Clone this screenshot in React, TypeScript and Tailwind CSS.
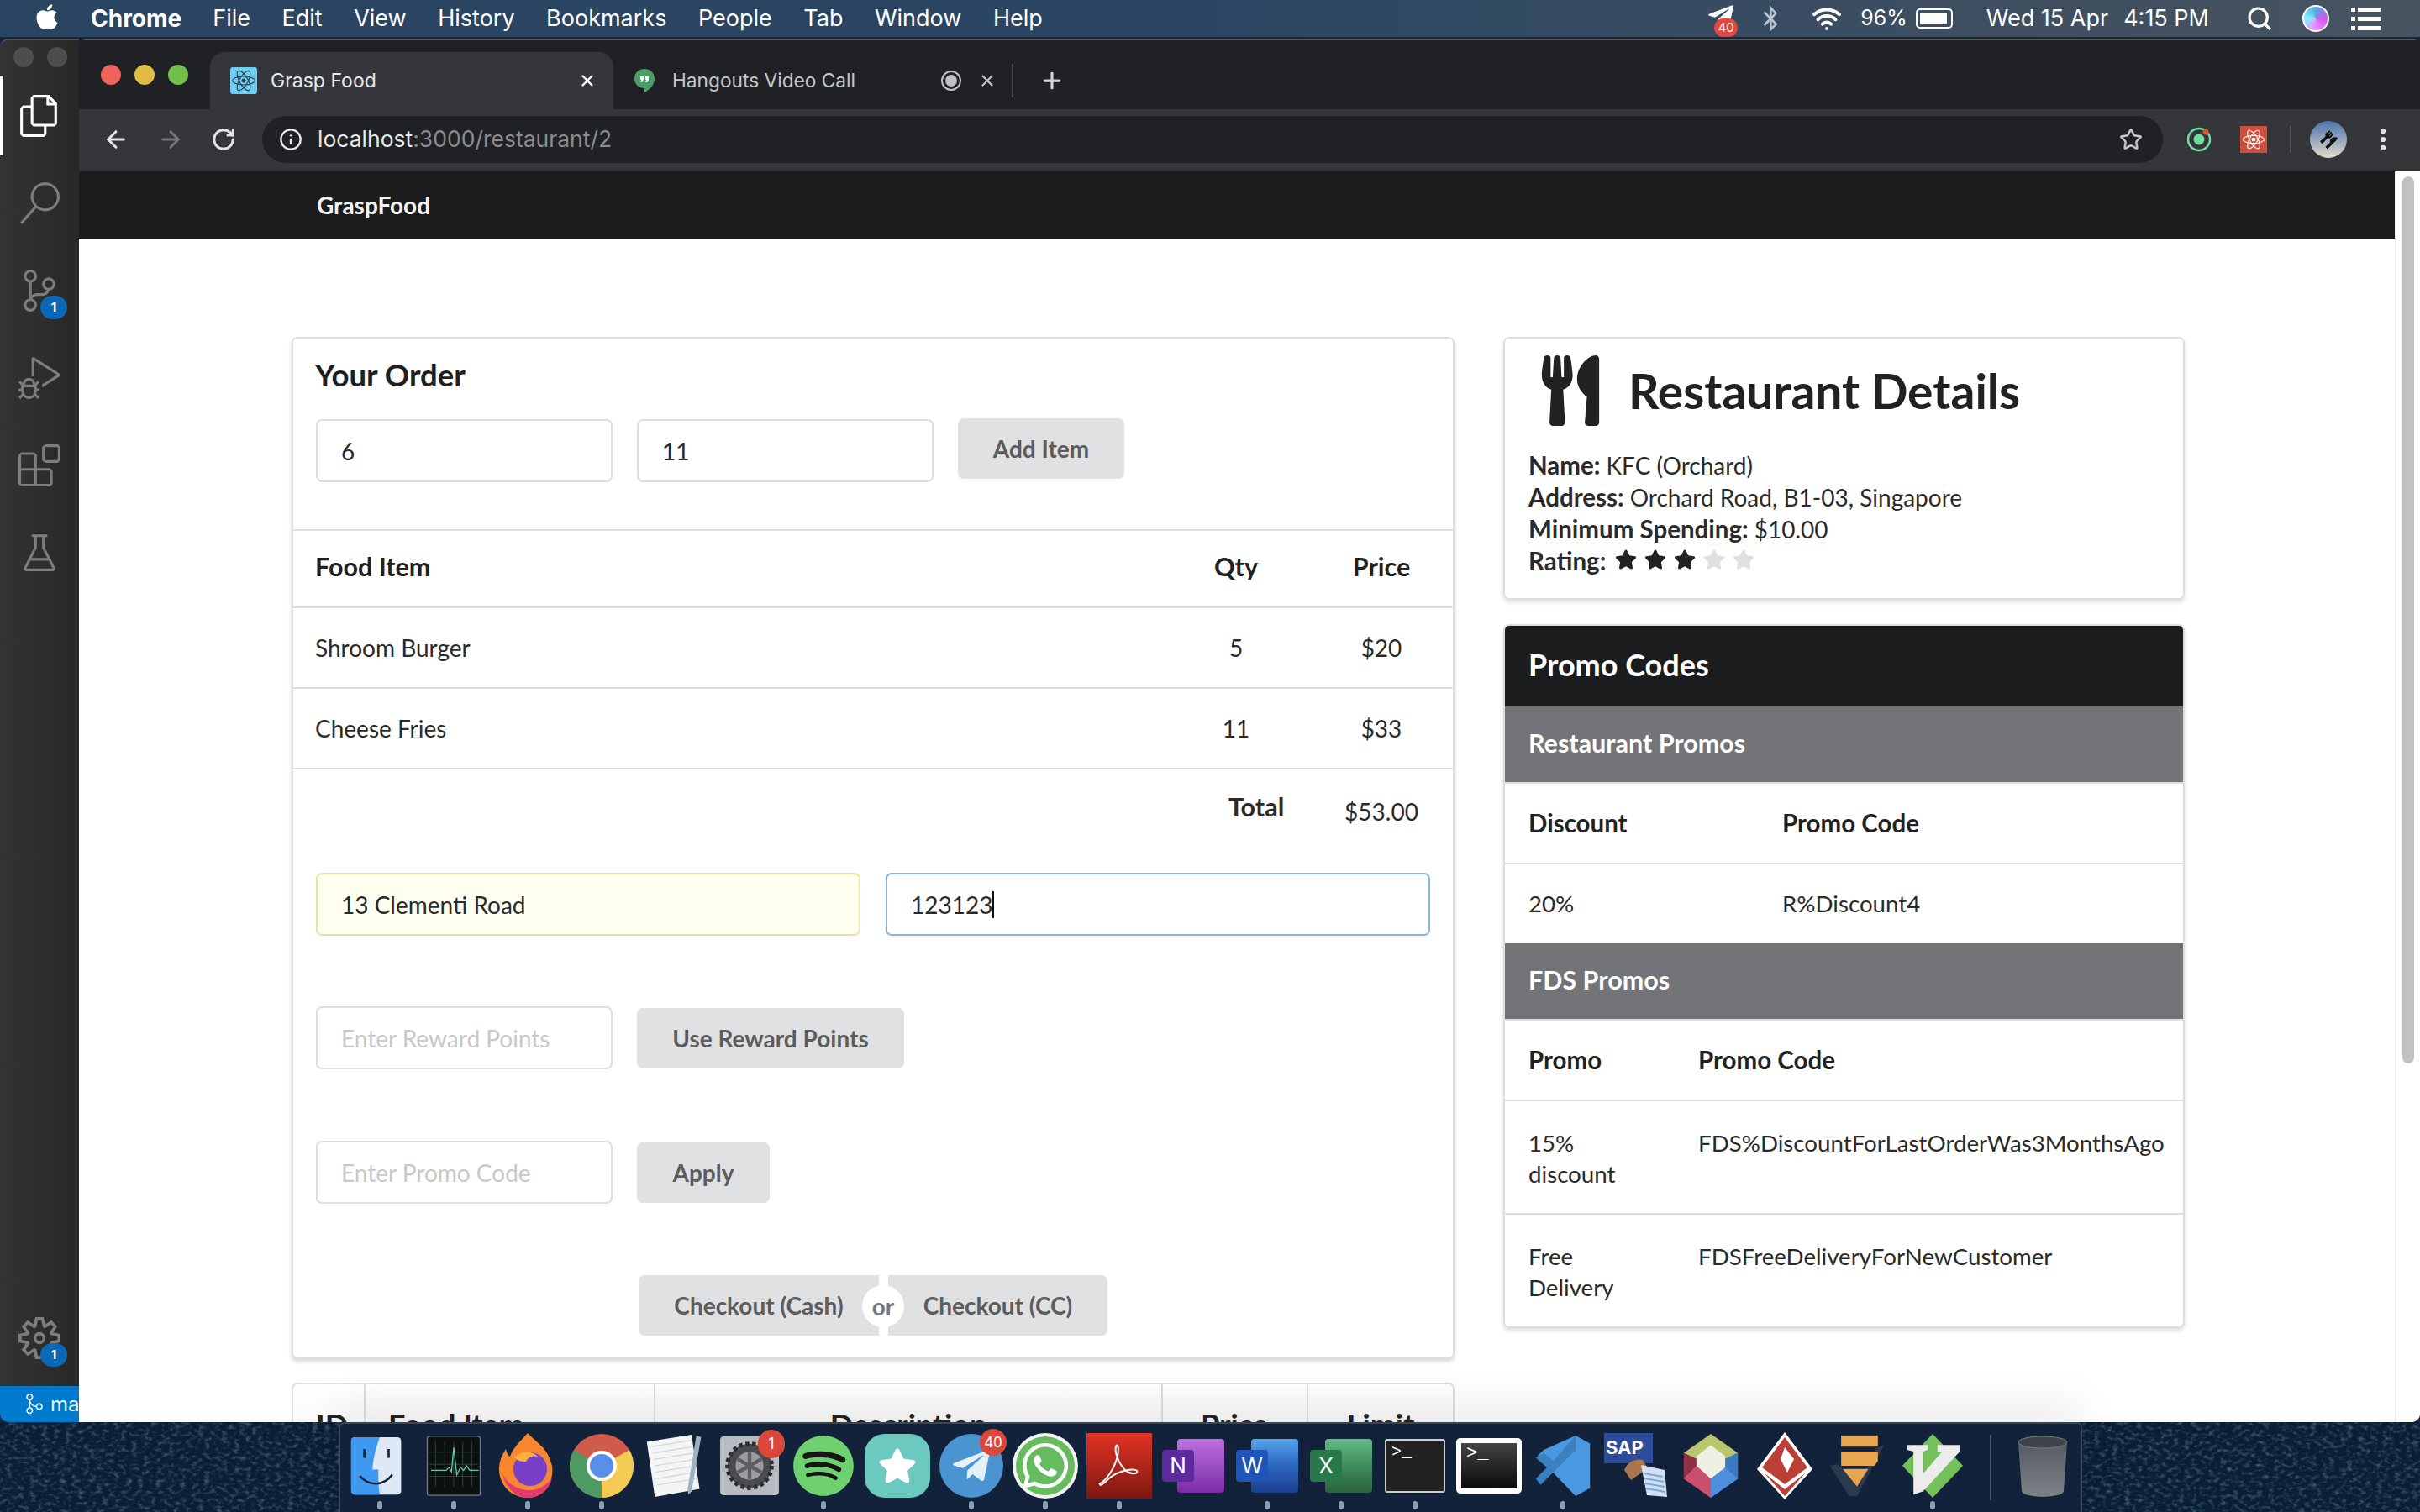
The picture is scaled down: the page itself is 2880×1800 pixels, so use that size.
import React from 'react';
import { FaApple, FaReact, FaStar, FaUtensils, FaSpotify, FaTelegramPlane, FaWhatsapp, FaBluetoothB } from 'react-icons/fa';
import { VscFiles, VscSearch, VscSourceControl, VscDebugAlt, VscExtensions, VscBeaker, VscSettingsGear, VscGitMerge } from 'react-icons/vsc';
import { ArrowLeft, ArrowRight, RotateCw, Info, Star, X, Plus, Search, EllipsisVertical, Wifi } from 'lucide-react';

const MENUS = ['File', 'Edit', 'View', 'History', 'Bookmarks', 'People', 'Tab', 'Window', 'Help'];

const MenuBar = () => (
  <div className="h-[44px] shrink-0 flex items-center bg-gradient-to-r from-[#294562] via-[#2b4663] to-[#48535f] text-white font-['Inter',sans-serif] text-[27px]">
    <FaApple className="ml-[41px] w-[30px] h-[34px] -mt-1" />
    <span className="ml-[37px] font-bold text-[28px]">Chrome</span>
    <div className="ml-[37px] flex gap-[37.500px]">
      {MENUS.map(m => <span key={m}>{m}</span>)}
    </div>
    <div className="ml-auto flex items-center">
      <div className="relative w-[34px] h-[40px] mr-[29px]">
        <FaTelegramPlane className="w-[34px] h-[34px]" />
        <span className="absolute left-[9px] top-[20px] w-[28px] h-[22px] rounded-full bg-[#e2483d] text-[15px] leading-[22px] text-center">40</span>
      </div>
      <FaBluetoothB className="w-[26px] h-[32px] text-[#b8c4d0] mr-[34px]" />
      <Wifi className="w-[40px] h-[36px] mr-[20px]" strokeWidth={2.6} />
      <span className="text-[25px]">96%</span>
      <div className="ml-[10px] w-[44px] h-[24px] border-2 border-white rounded-[5px] p-[3px] pr-[5px]">
        <div className="h-full bg-white rounded-[2px]" />
      </div>
      <span className="ml-[40px]">Wed 15 Apr</span>
      <span className="ml-[18px]">4:15 PM</span>
      <Search className="ml-[44px] w-[32px] h-[32px]" strokeWidth={2.4} />
      <div className="ml-[35px] w-[32px] h-[32px] rounded-full bg-[conic-gradient(#5ad,#c5e,#e8f,#8ef,#5ad)] border-2 border-white" />
      <div className="ml-[26px] mr-[46px] w-[36px] flex flex-col gap-[6px]">
        {[0, 1, 2].map(i => (
          <div key={i} className="flex gap-[3px]">
            <div className="w-[5px] h-[5px] bg-white" />
            <div className="flex-1 h-[5px] bg-white" />
          </div>
        ))}
      </div>
    </div>
  </div>
);

const ActivityIcon: React.FC<{ children: React.ReactNode; active?: boolean; badge?: boolean }> = ({ children, active, badge }) => (
  <div className={`relative h-[104px] flex items-center justify-center ${active ? 'text-white' : 'text-[#7d7d7d]'}`}>
    {active && <div className="absolute left-0 top-[4px] w-[4px] h-[95px] bg-white" />}
    {children}
    {badge && (
      <span className="absolute left-[48px] top-[58px] w-[32px] h-[28px] rounded-full bg-[#0a68b4] text-white text-[15px] font-bold leading-[28px] text-center font-['Inter',sans-serif]">1</span>
    )}
  </div>
);

const VsCodeRail = () => (
  <div className="w-[94px] shrink-0 flex flex-col bg-gradient-to-r from-[#333333] to-[#282828] rounded-tl-[10px] rounded-bl-[10px] overflow-hidden border-t-2 border-[#555]">
    <div className="h-[38px] flex items-start gap-[16px] pl-[16px] pt-[8px]">
      <div className="w-[24px] h-[24px] rounded-full bg-[#4d4d4d]" />
      <div className="w-[24px] h-[24px] rounded-full bg-[#4d4d4d]" />
    </div>
    <ActivityIcon active><VscFiles className="w-[50px] h-[50px]" /></ActivityIcon>
    <ActivityIcon><VscSearch className="w-[50px] h-[50px]" /></ActivityIcon>
    <ActivityIcon badge><VscSourceControl className="w-[50px] h-[50px]" /></ActivityIcon>
    <ActivityIcon><VscDebugAlt className="w-[50px] h-[50px]" /></ActivityIcon>
    <ActivityIcon><VscExtensions className="w-[50px] h-[50px]" /></ActivityIcon>
    <ActivityIcon><VscBeaker className="w-[50px] h-[50px]" /></ActivityIcon>
    <div className="mt-auto">
      <ActivityIcon badge><VscSettingsGear className="w-[50px] h-[50px]" /></ActivityIcon>
    </div>
    <div className="h-[43px] mt-[5px] bg-[#007acc] flex items-center text-[#e6f2fa] text-[24px] font-['Inter',sans-serif] pl-[28px] gap-[6px] overflow-hidden">
      <VscGitMerge className="w-[26px] h-[26px] shrink-0" />
      <span>ma</span>
    </div>
  </div>
);

const ChromeChrome = () => (
  <>
    <div className="h-[84px] shrink-0 flex items-end bg-[#202124] border-t-2 border-[#5c5c5c] font-['Inter',sans-serif] text-[23px]">
      <div className="flex gap-[16px] w-[156px] pl-[26px] self-start pt-[29px]">
        <div className="w-[24px] h-[24px] rounded-full bg-[#f1625a]" />
        <div className="w-[24px] h-[24px] rounded-full bg-[#e2bd45]" />
        <div className="w-[24px] h-[24px] rounded-full bg-[#72c04a]" />
      </div>
      <div className="w-[480px] h-[68px] bg-[#35363a] rounded-t-[18px] flex items-center pl-[24px] text-[#e8eaed]">
        <div className="w-[32px] h-[32px] rounded-[3px] bg-[#6fd0f5] flex items-center justify-center text-[#28404e]">
          <FaReact className="w-[28px] h-[28px]" />
        </div>
        <span className="ml-[16px]">Grasp Food</span>
        <X className="ml-auto mr-[20px] w-[22px] h-[22px] text-white" strokeWidth={2.6} />
      </div>
      <div className="h-[68px] flex items-center pl-[24px] text-[#c4c6c9]">
        <svg viewBox="0 0 26 30" className="w-[26px] h-[30px]">
          <path d="M13 1C6 1 1 6 1 12.5S6 24 13 24v5c6-3 12-9 12-16.5C25 6 20 1 13 1Z" fill="#4a9d67" />
          <path d="M8 10h4v4l-2 3H8l1.500-3H8Zm6 0h4v4l-2 3h-2l1.500-3H14Z" fill="#fff" />
        </svg>
        <span className="ml-[20px] w-[320px] text-[22.700px]">Hangouts Video Call</span>
        <div className="w-[24px] h-[24px] rounded-full border-2 border-[#bdc1c6] p-[3px]">
          <div className="w-full h-full rounded-full bg-[#bdc1c6]" />
        </div>
        <X className="ml-[20px] w-[22px] h-[22px] text-[#c4c6c9]" strokeWidth={2.4} />
        <div className="ml-[18px] w-[2px] h-[40px] bg-[#4b4c50]" />
        <Plus className="ml-[31px] w-[30px] h-[30px] text-[#d0d2d5]" strokeWidth={2.6} />
      </div>
    </div>
    <div className="h-[72px] shrink-0 flex items-center bg-[#35363a] border-b-2 border-[#2c2d30] box-content font-['Inter',sans-serif]">
      <ArrowLeft className="ml-[28px] w-[32px] h-[32px] text-[#e3e4e6]" strokeWidth={2.2} />
      <ArrowRight className="ml-[33px] w-[32px] h-[32px] text-[#77787b]" strokeWidth={2.2} />
      <RotateCw className="ml-[32px] w-[30px] h-[30px] text-[#e3e4e6]" strokeWidth={2.4} />
      <div className="ml-[31px] w-[2262px] h-[56px] rounded-full bg-[#202124] flex items-center pl-[20px] pr-[24px] text-[26.5px] text-[#e8eaed]">
        <Info className="w-[28px] h-[28px]" strokeWidth={2} />
        <span className="ml-[18px]">localhost<span className="text-[#8a8c90]">:3000/restaurant/2</span></span>
        <Star className="ml-auto w-[28px] h-[28px] text-[#c4c6c9]" strokeWidth={2.2} />
      </div>
      <svg viewBox="0 0 32 32" className="ml-[27px] w-[32px] h-[32px]">
        <circle cx="16" cy="16" r="13" fill="none" stroke="#6fdca0" strokeWidth="2.500" />
        <circle cx="16" cy="16" r="6.500" fill="#6fdca0" />
        <circle cx="24" cy="7" r="3.500" fill="#d8553d" />
      </svg>
      <div className="ml-[33px] w-[32px] h-[32px] bg-[#cf4f3f] flex items-center justify-center text-white">
        <FaReact className="w-[26px] h-[26px]" />
      </div>
      <div className="ml-[27px] w-[2px] h-[32px] bg-[#55565a]" />
      <div className="ml-[22px] w-[44px] h-[44px] rounded-full bg-gradient-to-b from-[#4c76ad] via-[#95a5bb] to-[#e2dccb] flex items-center justify-center text-[#111]">
        <FaUtensils className="w-[18px] h-[18px] rotate-45" />
      </div>
      <EllipsisVertical className="ml-[26px] w-[34px] h-[34px] text-[#e3e4e6]" strokeWidth={2.4} />
    </div>
  </>
);

const Input: React.FC<{ value?: string; placeholder?: string; w?: string }> = ({ value, placeholder, w = 'w-[353px]' }) => (
  <input
    readOnly
    value={value}
    placeholder={placeholder}
    className={`${w} h-[75px] px-[28px] border-2 border-[#dededf] rounded-[7px] bg-white text-[28px] text-[#2a2a2a] placeholder:text-[#c8c8c8] outline-none`}
  />
);

const Button: React.FC<{ children: React.ReactNode; className?: string }> = ({ children, className }) => (
  <button className={`h-[72px] px-[40px] bg-[#e0e1e2] text-[#5c5c5c] rounded-[7px] text-[28px] font-bold ${className || ''}`}>{children}</button>
);

const ITEMS = [
  { name: 'Shroom Burger', qty: '5', price: '$20' },
  { name: 'Cheese Fries', qty: '11', price: '$33' },
];

const OrderCard = () => (
  <div className="h-[1217px] border-2 border-[#dededf] rounded-[7px] shadow-[0_3px_5px_rgba(34,36,38,0.18)] flex flex-col bg-white">
    <h3 className="pl-[26px] pt-[20px] text-[36.5px] leading-[46px] font-bold text-[#1f1f1f]">Your Order</h3>
    <div className="pl-[27px] mt-[30px] flex gap-[29px] h-[131px] items-start">
      <Input value="6" />
      <Input value="11" />
      <Button className="w-[198px] !px-0 -mt-[1px]">Add Item</Button>
    </div>
    <div className="border-t-2 border-[#dededf] h-[92px] flex items-center text-[30.5px] font-bold text-[#222] pb-[4px]">
      <span className="pl-[26px] flex-1">Food Item</span>
      <span className="w-[176px] text-center">Qty</span>
      <span className="w-[170px] text-center">Price</span>
    </div>
    {ITEMS.map(i => (
      <div key={i.name} className="border-t-2 border-[#dededf] h-[96px] flex items-center text-[#2a2a2a]">
        <span className="pl-[26px] flex-1">{i.name}</span>
        <span className="w-[176px] text-center">{i.qty}</span>
        <span className="w-[170px] text-center">{i.price}</span>
      </div>
    ))}
    <div className="border-t-2 border-[#dededf] h-[125px] flex items-center text-[#2a2a2a] pb-[24px]">
      <span className="flex-1" />
      <span className="w-[176px] pl-[79px] text-[30.5px] font-bold -mt-[10px]">Total</span>
      <span className="w-[170px] text-center">$53.00</span>
    </div>
    <div className="pl-[27px] flex gap-[30px]">
      <input readOnly value="13 Clementi Road" className="w-[648px] h-[75px] px-[28px] border-2 border-[#e6e2a6] rounded-[7px] bg-[#fffff0] text-[28px] text-[#2a2a2a] outline-none" />
      <div className="w-[648px] h-[75px] px-[28px] border-2 border-[#85b7d9] rounded-[7px] flex items-center text-[28px] text-[#2a2a2a]">
        123123<span className="w-[2px] h-[32px] bg-[#111]" />
      </div>
    </div>
    <div className="pl-[27px] mt-[84px] flex gap-[29px] items-center">
      <Input placeholder="Enter Reward Points" />
      <Button className="w-[318px] !px-0">Use Reward Points</Button>
    </div>
    <div className="pl-[27px] mt-[85px] flex gap-[29px] items-center">
      <Input placeholder="Enter Promo Code" />
      <Button className="w-[158px] !px-0">Apply</Button>
    </div>
    <div className="mt-[85px] ml-[411px] flex w-[558px] h-[72px] relative">
      <Button className="w-[286px] !px-0 rounded-r-none">Checkout (Cash)</Button>
      <div className="w-[11px]" />
      <Button className="w-[261px] !px-0 rounded-l-none">Checkout (CC)</Button>
      <span className="absolute left-[266px] top-[12px] w-[50px] h-[50px] rounded-full bg-white text-[#777] font-bold text-[28px] leading-[50px] text-center">or</span>
    </div>
  </div>
);

const MenuTableHead = () => (
  <div className="mt-[28px] h-[200px] border-2 border-[#dededf] rounded-t-[7px] flex items-start bg-gradient-to-b from-[#ffffff] to-[#ebebeb] text-[36px] font-bold text-[#222] overflow-hidden">
    {[
      { label: 'ID', cls: 'w-[84px] pl-[27px]' },
      { label: 'Food Item', cls: 'w-[346px] pl-[27px] border-l-2 border-[#dededf]' },
      { label: 'Description', cls: 'w-[604px] text-center border-l-2 border-[#dededf]' },
      { label: 'Price', cls: 'w-[174px] text-center border-l-2 border-[#dededf]' },
      { label: 'Limit', cls: 'w-[174px] text-center border-l-2 border-[#dededf]' },
    ].map(h => (
      <div key={h.label} className={`h-full pt-[21px] ${h.cls}`}>{h.label}</div>
    ))}
  </div>
);

const RestaurantCard = () => (
  <div className="h-[313px] border-2 border-[#dededf] rounded-[7px] shadow-[0_3px_5px_rgba(34,36,38,0.15)] px-[28px] text-[#2a2a2a] text-[28px] leading-[38px]">
    <div className="flex items-center pt-[20px] pl-[12px]">
      <FaUtensils className="w-[76px] h-[84px] text-[#222]" />
      <h2 className="ml-[31px] text-[57px] leading-[84px] font-bold text-[#222]">Restaurant Details</h2>
    </div>
    <div className="mt-[28px]">
      <div><b className="text-[29.5px]">Name:</b> KFC (Orchard)</div>
      <div><b className="text-[29.5px]">Address:</b> Orchard Road, B1-03, Singapore</div>
      <div><b className="text-[29.5px]">Minimum Spending:</b> $10.00</div>
      <div className="flex items-center">
        <b className="text-[29.5px]">Rating:</b>
        <div className="ml-[11px] flex gap-[9px] -mt-[4px]">
          {[0, 1, 2, 3, 4].map(i => (
            <FaStar key={i} className={`w-[26px] h-[26px] ${i < 3 ? 'text-[#222]' : 'text-[#e0e0e0]'}`} />
          ))}
        </div>
      </div>
    </div>
  </div>
);

const PromoHead: React.FC<{ children: string }> = ({ children }) => (
  <div className="h-[90px] bg-[#737477] flex items-center pl-[28px] text-white text-[30.5px] font-bold pb-[2px]">{children}</div>
);

const PromoRow: React.FC<{ a: React.ReactNode; b: string; w: string; head?: boolean; tall?: boolean }> = ({ a, b, w, head, tall }) => (
  <div className={`flex border-t-2 border-[#dededf] pl-[28px] ${head ? 'h-[96px] items-center font-bold text-[29.5px] text-[#222]' : tall ? 'h-[135px] pt-[31px] leading-[37px]' : 'h-[96px] items-center'}`}>
    <div className={w}>{a}</div>
    <div>{b}</div>
  </div>
);

const PromoCard = () => (
  <div className="mt-[29px] border-2 border-[#dededf] rounded-[7px] shadow-[0_3px_5px_rgba(34,36,38,0.15)] text-[#2a2a2a] text-[27.7px] overflow-hidden">
    <div className="h-[96px] bg-[#1b1c1d] flex items-center pl-[28px] text-white text-[36px] font-bold pb-[4px]">Promo Codes</div>
    <PromoHead>Restaurant Promos</PromoHead>
    <PromoRow head a="Discount" b="Promo Code" w="w-[302px]" />
    <PromoRow a="20%" b="R%Discount4" w="w-[302px]" />
    <PromoHead>FDS Promos</PromoHead>
    <PromoRow head a="Promo" b="Promo Code" w="w-[202px]" />
    <PromoRow tall a={<>15%<br />discount</>} b="FDS%DiscountForLastOrderWas3MonthsAgo" w="w-[202px]" />
    <PromoRow tall a={<>Free<br />Delivery</>} b="FDSFreeDeliveryForNewCustomer" w="w-[202px]" />
  </div>
);

const Page = () => (
  <div className="flex-1 flex min-h-0 bg-white font-['Lato',sans-serif] text-[28px]">
    <div className="flex-1 min-w-0 flex flex-col overflow-hidden">
      <div className="h-[80px] shrink-0 bg-[#1b1c1d] flex items-center pl-[283px] text-[#f2f2f2] text-[28px] font-bold">GraspFood</div>
      <div className="flex pl-[253px] pt-[117px] gap-[58px]">
        <div className="w-[1384px] shrink-0">
          <OrderCard />
          <MenuTableHead />
        </div>
        <div className="w-[811px] shrink-0">
          <RestaurantCard />
          <PromoCard />
        </div>
      </div>
    </div>
    <div className="w-[30px] shrink-0 bg-white border-l-2 border-[#ececec] pt-[6px] pl-[7px]">
      <div className="w-[14px] h-[1056px] rounded-full bg-[#c2c2c2]" />
    </div>
  </div>
);

const Dot = () => <div className="w-[6px] h-[10px] rounded-full bg-[#8aa0b4]" />;

const Tile: React.FC<{ cls: string; label?: string; labelCls?: string }> = ({ cls, label, labelCls }) => (
  <div className={`relative w-[56px] ml-[18px] h-[64px] ${cls}`}>
    {label && <span className={`absolute -left-[18px] top-[13px] w-[38px] h-[38px] rounded-[4px] text-white text-[26px] leading-[38px] text-center font-['Inter',sans-serif] ${labelCls || ''}`}>{label}</span>}
  </div>
);

const DOCK: { key: string; run?: boolean; node: React.ReactNode }[] = [
  { key: 'finder', run: true, node: (
    <svg viewBox="0 0 80 80" className="w-[70px] h-[70px]">
      <rect x="1" y="1" width="68" height="78" rx="5" fill="#dfe9f5" />
      <path d="M6 1h34c-5 14-9 28-10 44h8c0 12 0 22 2 34H6a5 5 0 0 1-5-5V6a5 5 0 0 1 5-5Z" fill="#3d9af0" />
      <path d="M19 17v12M52 17v12" stroke="#123" strokeWidth="3" />
      <path d="M13 54c12 14 32 14 44-2" fill="none" stroke="#123" strokeWidth="3" />
    </svg>
  ) },
  { key: 'activity', run: true, node: (
    <svg viewBox="0 0 72 80" className="w-[72px] h-[72px]">
      <rect x="1" y="1" width="70" height="78" rx="3" fill="#0c1110" stroke="#6d7b84" strokeWidth="1.500" />
      <path d="M12 8v60M24 8v60M36 8v60M48 8v60M60 8v60M4 22h64M4 38h64M4 54h64" stroke="#2d4a44" strokeWidth="1" />
      <path d="M6 46h20l4-4 3 6 3-32 4 36 5-10 4 4 4-6 4 6h12" fill="none" stroke="#63c6a7" strokeWidth="1.500" />
    </svg>
  ) },
  { key: 'firefox', run: true, node: (
    <svg viewBox="0 0 80 80" className="w-[80px] h-[80px]">
      <path d="M40 1c8 10 24 16 29 39 3 22-12 38-29 38C20 78 5 62 6 42c1-12 6-18 8-22 1 5 3 8 5 9 3-10 12-18 21-28Z" fill="#f7862e" />
      <path d="M10 50c4 16 16 28 30 28 16 0 26-10 29-24-8 12-22 18-36 14C22 65 14 58 10 50Z" fill="#e03a6f" />
      <circle cx="43" cy="44" r="20" fill="#7a3fc7" />
      <path d="M24 30c8-8 22-8 28-1-8-2-12 2-14 6-6 0-11-1-14-5Z" fill="#f9b13c" />
    </svg>
  ) },
  { key: 'chrome', run: true, node: (
    <svg viewBox="0 0 80 80" className="w-[80px] h-[80px]">
      <circle cx="40" cy="40" r="38" fill="#d05a4b" />
      <path d="M40 40 73 21a38 38 0 0 1-33 57Z" fill="#f3ca52" />
      <path d="M40 40 40 78A38 38 0 0 1 7 21Z" fill="#4f9a62" />
      <circle cx="40" cy="40" r="18" fill="#fff" />
      <circle cx="40" cy="40" r="14" fill="#5a8fe8" />
    </svg>
  ) },
  { key: 'textedit', node: (
    <svg viewBox="0 0 80 80" className="w-[76px] h-[76px]">
      <path d="M4 10 60 1l10 68-56 10Z" fill="#f4f5f6" />
      <path d="M10 16l50-8M12 24l50-8M13 32l50-8M14 40l50-8M15 48l50-8M16 56l50-8M17 64l50-8" stroke="#c9cdd2" strokeWidth="1" />
      <path d="M66 2l6 2-12 68-4 4-1-6Z" fill="#9fb2c2" />
    </svg>
  ) },
  { key: 'prefs', node: (
    <div className="relative">
      <svg viewBox="0 0 80 80" className="w-[72px] h-[70px]">
        <rect width="80" height="80" rx="5" fill="#b7bcc2" />
        <circle cx="40" cy="40" r="30" fill="#4a4c4f" stroke="#2b2c2e" strokeWidth="6" strokeDasharray="5 4" />
        <circle cx="40" cy="40" r="19" fill="#9a9c9f" />
        <path d="M40 22v36M24 49l32-18M24 31l32 18" stroke="#5d5f62" strokeWidth="5" />
      </svg>
      <span className="absolute -right-[6px] -top-[8px] w-[32px] h-[34px] rounded-full bg-[#d9483b] text-white text-[18px] leading-[34px] text-center font-['Inter',sans-serif]">1</span>
    </div>
  ) },
  { key: 'spotify', run: true, node: <div className="w-[70px] h-[70px] rounded-full bg-[#161616] flex items-center justify-center"><FaSpotify className="w-[74px] h-[74px] text-[#6ed06e] shrink-0" /></div> },
  { key: 'star', node: (
    <div className="w-[78px] h-[76px] rounded-[24px] bg-[#6cc9bf] flex items-center justify-center text-white"><FaStar className="w-[46px] h-[50px]" /></div>
  ) },
  { key: 'telegram', run: true, node: (
    <div className="relative w-[76px] h-[76px] rounded-full bg-[#4a94d2] flex items-center justify-center text-[#e4f1fa]">
      <FaTelegramPlane className="w-[50px] h-[50px]" />
      <span className="absolute -right-[4px] -top-[6px] w-[32px] h-[32px] rounded-full bg-[#d9483b] text-white text-[17px] leading-[32px] text-center font-['Inter',sans-serif]">40</span>
    </div>
  ) },
  { key: 'whatsapp', run: true, node: (
    <div className="w-[70px] h-[70px] rounded-full bg-[#66bb5f] ring-[4px] ring-[#f2f2f2] flex items-center justify-center text-white"><FaWhatsapp className="w-[62px] h-[62px]" /></div>
  ) },
  { key: 'acrobat', run: true, node: (
    <svg viewBox="0 0 80 80" className="w-[80px] h-[78px]">
      <defs><linearGradient id="acro" x1="0" y1="0" x2="0" y2="1"><stop offset="0" stopColor="#e23325" /><stop offset="1" stopColor="#7d1710" /></linearGradient></defs>
      <rect width="80" height="80" fill="url(#acro)" />
      <path d="M16 62c8-4 18-18 22-34 2-10 0-16-2-12-2 6 2 20 12 30 6 5 14 4 14 1-1-5-22-2-34 8-6 6-12 11-12 7Z" fill="none" stroke="#fff" strokeWidth="2" />
    </svg>
  ) },
  { key: 'onenote', node: <Tile cls="bg-gradient-to-b from-[#bb6fe0] to-[#7b2ca8] rounded-[4px]" label="N" labelCls="bg-[#5d2a9c]" /> },
  { key: 'word', run: true, node: <Tile cls="bg-gradient-to-b from-[#56a2ea] via-[#2d66bf] to-[#1d3f90] rounded-[4px]" label="W" labelCls="bg-[#1f55b8]" /> },
  { key: 'excel', run: true, node: <Tile cls="bg-gradient-to-b from-[#63bb85] via-[#3f8c5a] to-[#2b6240] rounded-[4px]" label="X" labelCls="bg-[#28794a]" /> },
  { key: 'iterm', run: true, node: (
    <div className="w-[72px] h-[64px] bg-[#222] border-2 border-[#c9cdd2] rounded-[3px] pl-[6px] text-white text-[20px] font-['Liberation_Mono',monospace] leading-[28px]">&gt;_</div>
  ) },
  { key: 'terminal', node: (
    <div className="w-[78px] h-[66px] bg-white rounded-[5px] p-[6px]">
      <div className="w-full h-full bg-gradient-to-b from-[#444] to-[#0c0c0c] text-white text-[22px] font-['Liberation_Mono',monospace] leading-[26px] pl-[6px]">&gt;_</div>
    </div>
  ) },
  { key: 'vscode', run: true, node: (
    <svg viewBox="0 0 80 80" className="w-[76px] h-[76px]">
      <path d="M56 2 74 12v56L56 78 8 28l8-8Z" fill="#4a98e0" />
      <path d="M56 2 28 34 16 24l-10 6 14 12L6 56l6 8 14-14 30-30Z" fill="#3a7fbe" />
    </svg>
  ) },
  { key: 'sap', node: (
    <div className="relative w-[78px] h-[78px]">
      <span className="absolute left-0 top-0 w-[58px] h-[36px] bg-[#2e4c9b] text-white text-[22px] font-bold leading-[34px] pl-[2px] font-['Inter',sans-serif]">SAP</span>
      <svg viewBox="0 0 78 78" className="w-full h-full relative">
        <path d="M24 44c4-10 14-14 22-12l6 10-20 14Z" fill="#a9764d" />
        <path d="M44 38l28 6 3 32-24-2Z" fill="#cfe0f0" />
        <path d="M48 48l22 4M48 54l23 4M49 60l23 4M50 66l23 4" stroke="#7fa6d8" strokeWidth="2" />
      </svg>
    </div>
  ) },
  { key: 'gem', node: (
    <svg viewBox="0 0 80 80" className="w-[76px] h-[80px]">
      <path d="M40 0 74 24 40 40 6 24Z" fill="#b9c66b" />
      <path d="M6 24 40 40v40L6 56Z" fill="#8f2e49" />
      <path d="M74 24 40 40v40l34-24Z" fill="#3d79c2" />
      <path d="M22 28 40 14l18 14v24L40 66 22 52Z" fill="#eef0e4" />
      <path d="M6 56l34 24V56L22 40Z" fill="#c9506c" />
      <path d="M74 56 40 80V56l18-14Z" fill="#4f8edb" />
    </svg>
  ) },
  { key: 'diamond', node: (
    <svg viewBox="0 0 70 80" className="w-[70px] h-[80px]">
      <path d="M35 0 68 44 35 80 2 44Z" fill="#fff" />
      <path d="M35 6 62 42 35 62 8 42Z" fill="#ba4037" />
      <path d="M10 48 35 68 60 48 35 76Z" fill="#ba4037" />
      <path d="M35 18 46 32 38 48 30 32Z" fill="#fff" />
    </svg>
  ) },
  { key: 'stack', node: (
    <svg viewBox="0 0 80 80" className="w-[76px] h-[78px]">
      <path d="M4 40 28 78h10l34-64-10 4-22 48L14 38Z" fill="#2c3a4e" />
      <rect x="18" y="2" width="46" height="14" fill="#e7a64f" />
      <path d="M18 22h46v12l-4 6H18Z" fill="#e7a64f" />
      <path d="M20 44h32l-14 22Z" fill="#e7a64f" />
    </svg>
  ) },
  { key: 'vim', run: true, node: (
    <svg viewBox="0 0 80 80" className="w-[76px] h-[78px]">
      <path d="M40 0 78 40 40 80 2 40Z" fill="#74c15b" />
      <path d="M8 14h26v6l-6 2v28L52 22h-6v-8h28v8L28 72l-12 4V22l-8-2Z" fill="#ececec" />
    </svg>
  ) },
];

const Wallpaper = () => (
  <svg className="absolute inset-0 w-full h-full">
    <filter id="sea">
      <feTurbulence type="fractalNoise" baseFrequency="0.14 0.22" numOctaves="3" seed="4" />
      <feColorMatrix values="0 0 0 0 0.11  0 0 0 0 0.23  0 0 0 0 0.34  0 0 0 1.5 -0.72" />
    </filter>
    <rect width="100%" height="100%" fill="#0a1f34" />
    <rect width="100%" height="100%" filter="url(#sea)" />
  </svg>
);

const Dock = () => (
  <div className="relative h-[107px] shrink-0 overflow-visible">
    <Wallpaper />
    <div className="relative z-10 ml-[404px] w-[2074px] h-[107px] bg-[#12223a] border-t-2 border-x border-[#394656] rounded-t-[6px] flex pl-[3px] shadow-[0_-24px_50px_rgba(0,0,0,0.07)]">
      {DOCK.map(d => (
        <div key={d.key} className="w-[88px] h-full flex flex-col items-center relative">
          <div className="h-[80px] mt-[10px] flex items-center justify-center">{d.node}</div>
          {d.run && <div className="absolute bottom-[3px]"><Dot /></div>}
        </div>
      ))}
      <div className="ml-[24px] mt-[13px] w-[2px] h-[78px] bg-[#4b5866]" />
      <svg viewBox="0 0 60 76" className="ml-[31px] mt-[14px] w-[60px] h-[76px]">
        <defs><linearGradient id="bin" x1="0" y1="0" x2="0" y2="1"><stop offset="0" stopColor="#565c63" /><stop offset="1" stopColor="#7c8186" /></linearGradient></defs>
        <path d="M1 8 5 66c1 9 49 9 50 0L59 8Z" fill="url(#bin)" />
        <ellipse cx="30" cy="8" rx="29" ry="7" fill="#3f444a" stroke="#777c82" />
      </svg>
    </div>
  </div>
);

export default function App() {
  return (
    <div className="relative w-[2880px] h-[1800px] overflow-hidden flex flex-col bg-[#0a2036]">
      <MenuBar />
      <div className="flex-1 min-h-0 flex pt-[2px] bg-[#12283f]">
        <VsCodeRail />
        <div className="flex-1 min-w-0 flex flex-col rounded-t-[10px] rounded-br-[10px] overflow-hidden">
          <ChromeChrome />
          <Page />
        </div>
      </div>
      <Dock />
    </div>
  );
}
